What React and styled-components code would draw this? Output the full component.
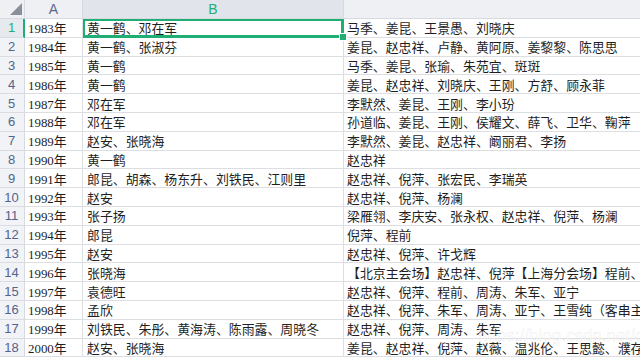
import React from "react";
import styled, { createGlobalStyle } from "styled-components";

const Global = createGlobalStyle`
  html, body { margin: 0; padding: 0; background: #fff; }
  body { width: 640px; height: 360px; overflow: hidden; }
`;

const rows = [
  ["1983年", "黄一鹤、邓在军", "马季、姜昆、王景愚、刘晓庆"],
  ["1984年", "黄一鹤、张淑芬", "姜昆、赵忠祥、卢静、黄阿原、姜黎黎、陈思思"],
  ["1985年", "黄一鹤", "马季、姜昆、张瑜、朱苑宜、斑斑"],
  ["1986年", "黄一鹤", "姜昆、赵忠祥、刘晓庆、王刚、方舒、顾永菲"],
  ["1987年", "邓在军", "李默然、姜昆、王刚、李小玢"],
  ["1988年", "邓在军", "孙道临、姜昆、王刚、侯耀文、薛飞、卫华、鞠萍"],
  ["1989年", "赵安、张晓海", "李默然、姜昆、赵忠祥、阚丽君、李扬"],
  ["1990年", "黄一鹤", "赵忠祥"],
  ["1991年", "郎昆、胡森、杨东升、刘铁民、江则里", "赵忠祥、倪萍、张宏民、李瑞英"],
  ["1992年", "赵安", "赵忠祥、倪萍、杨澜"],
  ["1993年", "张子扬", "梁雁翎、李庆安、张永权、赵忠祥、倪萍、杨澜"],
  ["1994年", "郎昆", "倪萍、程前"],
  ["1995年", "赵安", "赵忠祥、倪萍、许戈辉"],
  ["1996年", "张晓海", "【北京主会场】赵忠祥、倪萍【上海分会场】程前、袁鸣"],
  ["1997年", "袁德旺", "赵忠祥、倪萍、程前、周涛、朱军、亚宁"],
  ["1998年", "孟欣", "赵忠祥、倪萍、朱军、周涛、亚宁、王雪纯（客串主持）"],
  ["1999年", "刘铁民、朱彤、黄海涛、陈雨露、周晓冬", "赵忠祥、倪萍、周涛、朱军"],
  ["2000年", "赵安、张晓海", "姜昆、赵忠祥、倪萍、赵薇、温兆伦、王思懿、濮存昕"],
];

const GREEN = "#1fae74";

const Sheet = styled.div`
  position: relative;
  width: 640px;
  height: 360px;
  overflow: hidden;
  display: grid;
  grid-template-columns: 25px 58px 261px 420px;
  grid-template-rows: 19px repeat(18, 18.8px);
  background: #fff;
`;

const Corner = styled.div`
  background: #eef0f4;
  border-right: 1px solid #d6d9df;
  border-bottom: 1px solid #d6d9df;
  box-sizing: border-box;
  display: flex;
  align-items: flex-end;
  justify-content: flex-end;
  padding: 0 2px 3px 0;
`;

const ColHead = styled.div`
  background: ${(p) => (p.$active ? "#e1e4ea" : "#eef0f4")};
  color: ${(p) => (p.$active ? GREEN : "#5d6b8a")};
  font-family: "Liberation Sans", Arial, sans-serif;
  font-size: 14px;
  display: flex;
  align-items: center;
  justify-content: center;
  border-right: 1px solid #d6d9df;
  border-bottom: 1px solid #d6d9df;
  box-sizing: border-box;
`;

const RowHead = styled.div`
  background: ${(p) => (p.$active ? "#e6e9ee" : "#f2f3f6")};
  color: ${(p) => (p.$active ? GREEN : "#53648a")};
  font-family: "Liberation Sans", Arial, sans-serif;
  font-size: 13px;
  display: flex;
  align-items: center;
  justify-content: center;
  border-right: ${(p) => (p.$active ? `2px solid ${GREEN}` : "1px solid #d6d9df")};
  border-bottom: 1px solid #dadce1;
  box-sizing: border-box;
  padding-right: ${(p) => (p.$active ? "0" : "1px")};
`;

const Cell = styled.div`
  position: relative;
  font-family: "Liberation Serif", "Noto Sans CJK SC", serif;
  font-size: 12.9px;
  color: #1f1f1f;
  white-space: nowrap;
  overflow: ${(p) => (p.$clip ? "hidden" : "visible")};
  display: flex;
  align-items: center;
  padding-left: ${(p) => p.$pad}px;
  border-right: 1px solid #dcdee2;
  border-bottom: 1px solid #dcdee2;
  box-sizing: border-box;
  z-index: ${(p) => (p.$selected ? 2 : 0)};
  ${(p) =>
    p.$selected &&
    `box-shadow: inset 0 0 0 2px ${GREEN}; border-color: ${GREEN};`}
`;

const Handle = styled.span`
  position: absolute;
  right: -4px;
  bottom: -4px;
  width: 6px;
  height: 6px;
  background: ${GREEN};
  border: 1px solid #fff;
`;

const Watermark = styled.div`
  position: absolute;
  left: 478px;
  top: 326px;
  font-family: "Liberation Sans", Arial, sans-serif;
  font-size: 17px;
  color: rgba(255, 255, 255, 0.5);
  -webkit-text-stroke: 0.4px rgba(180, 180, 180, 0.3);
  white-space: nowrap;
  pointer-events: none;
  z-index: 5;
`;

export default function App() {
  return (
    <>
      <Global />
      <Sheet>
        <Corner>
          <svg width="12" height="12" viewBox="0 0 12 12">
            <polygon points="12,0 12,12 0,12" fill="#8b8f99" />
          </svg>
        </Corner>
        <ColHead>A</ColHead>
        <ColHead $active>B</ColHead>
        <ColHead />
        {rows.map((r, i) => (
          <React.Fragment key={i}>
            <RowHead $active={i === 0}>{i + 1}</RowHead>
            <Cell $pad={3}>{r[0]}</Cell>
            <Cell $pad={4} $selected={i === 0}>
              {r[1]}
              {i === 0 && <Handle />}
            </Cell>
            <Cell $pad={3} $clip>
              {r[2]}
            </Cell>
          </React.Fragment>
        ))}
        <Watermark>https://blog.csdn.net/chinahergits2008</Watermark>
      </Sheet>
    </>
  );
}
